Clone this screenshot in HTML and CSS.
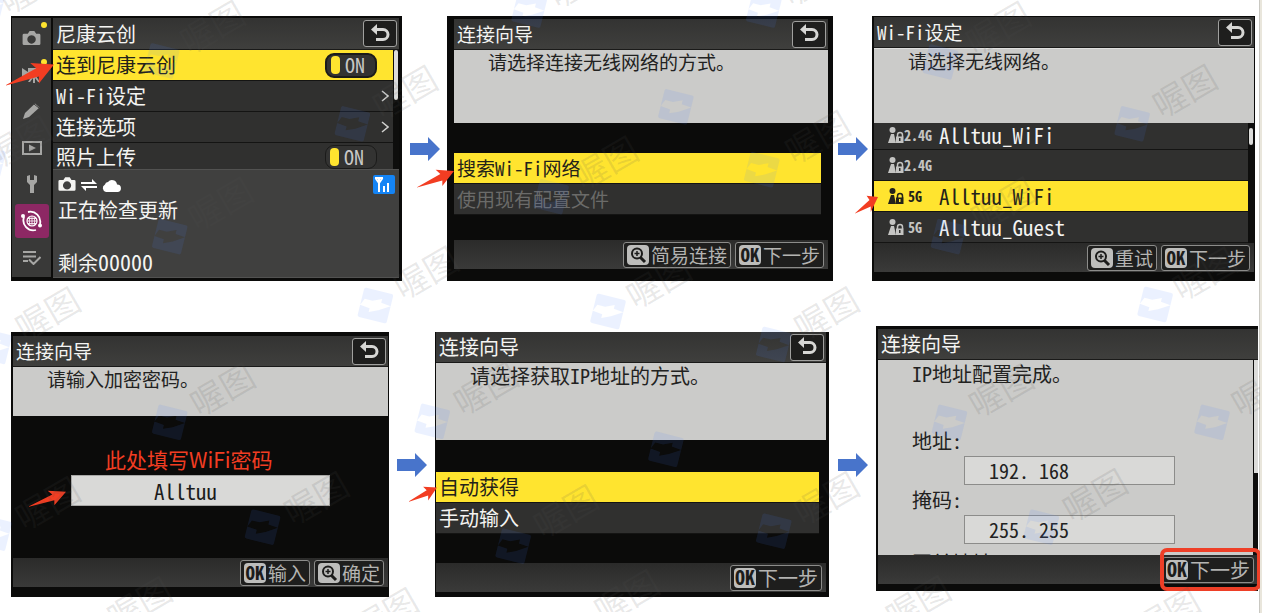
FILE: index.html
```html
<!DOCTYPE html>
<html lang="zh-CN">
<head>
<meta charset="utf-8">
<title>连接向导</title>
<link rel="stylesheet" href="styles.css">
</head>
<body>
<svg class="defs" aria-hidden="true">
  <defs>
    <symbol id="back" viewBox="0 0 20 20"><path d="M6 5.500h7a4.500 4.500 0 0 1 0 10H6" fill="none" stroke="#d6d6d4" stroke-width="3"/><path d="M1 5.500 7 0v11z" fill="#d6d6d4"/></symbol>
    <symbol id="mag" viewBox="0 0 22 20"><rect width="22" height="20" rx="4" fill="#bdbdbb"/><circle cx="10" cy="8.500" r="5" fill="none" stroke="#1c1c1b" stroke-width="2"/><path d="M13.500 12.500 18 17" stroke="#1c1c1b" stroke-width="3"/><path d="M7.500 8.500h5M10 6v5" stroke="#1c1c1b" stroke-width="1.500"/></symbol>
    <symbol id="flow" viewBox="0 0 30 24"><path d="M0 6h18V0l12 12-12 12v-6H0z" fill="#4874cb"/></symbol>
    <symbol id="point" viewBox="0 0 111 50" preserveAspectRatio="none"><path d="M0 48 70 13 56 2 111 5 76 45 76 30 0 49z" fill="#f23d22"/></symbol>
    <symbol id="cam" viewBox="0 0 20 16"><path fill-rule="evenodd" d="M2 3h4l2-3h5l2 3h3q1.500 0 1.500 1.500v9q0 1.500-1.500 1.500H2Q.5 15 .5 13.500v-9Q.5 3 2 3zm8 1.500a4.500 4.500 0 1 0 .1 0z" fill="currentColor"/></symbol>
    <symbol id="lock" viewBox="0 0 16 16"><circle cx="4.500" cy="3" r="3" fill="currentColor"/><path d="M3 7h3l2 9H0z" fill="currentColor"/><path d="M9.500 10V8a2.500 2.500 0 0 1 5 0v2" fill="none" stroke="currentColor" stroke-width="1.500"/><path fill-rule="evenodd" d="M8 9.500h7.500V16H8zm3 1.500v3h1.500v-3z" fill="currentColor"/></symbol>
    <g id="mark"><path transform="rotate(14)" fill-rule="evenodd" d="M-13-15h26a2 2 0 0 1 2 2v26a2 2 0 0 1-2 2h-26a2 2 0 0 1-2-2v-26a2 2 0 0 1 2-2zM-15 3-5 4v4L4 4 15-3 5-4v-4L-4-4-12-4z"/></g>
    <text id="word" class="word" transform="rotate(-30)" x="-34" y="12">喔图</text>
  </defs>
</svg>

<main class="board">
  <div class="flow flow-top">
    <section class="screen screen-menu">
      <nav class="side" aria-label="菜单">
        <button class="tab dot" aria-label="照片拍摄"><svg width="19" height="15"><use href="#cam"/></svg></button>
        <button class="tab dot" aria-label="视频拍摄"><svg width="20" height="16" viewBox="0 0 20 16"><path d="M0 1 6 5v2L0 10zM6 1h13v8H6zM10 9h4l4 6h-2l-3-4v5h-2v-5l-3 4H6z" fill="#a6a6a4"/></svg></button>
        <button class="tab" aria-label="自定义设定"><svg width="18" height="18" viewBox="0 0 18 18"><path d="M0 17 2 11 12 1.500 16.500 5.500 6 15z" fill="#a6a6a4"/><path d="m11 2 5 4" stroke="#393938"/></svg></button>
        <button class="tab" aria-label="播放"><svg width="20" height="14" viewBox="0 0 20 14"><path d="M1 1h18v12H1z" fill="none" stroke="#a6a6a4" stroke-width="2"/><path d="m7 3.500 7 3.500-7 3.500z" fill="#a6a6a4"/></svg></button>
        <button class="tab" aria-label="设定"><svg width="10" height="19" viewBox="0 0 10 19"><path d="M0 1 3 0v5h4V0l3 1v6L7 10v8H3v-8L0 7z" fill="#a6a6a4"/></svg></button>
        <button class="tab on" aria-label="网络"><svg width="22" height="22" viewBox="0 0 22 22"><g fill="none" stroke="#fff"><path d="M7 2a10 10 0 0 1 12 12M15 20A10 10 0 0 1 3 7" stroke-width="1.800"/><circle cx="11" cy="11" r="5" stroke-width="1.200"/><path d="M6 11h10M7 8.500h8M7 13.500h8M11 6v10M9 6.500q-1.500 4.500 0 9M13 6.500q1.500 4.500 0 9" stroke-width=".8"/></g><circle cx="2" cy="6" r="2" fill="#fff"/><circle cx="19" cy="15.500" r="2" fill="#fff"/></svg></button>
        <button class="tab" aria-label="我的菜单"><svg width="18" height="14" viewBox="0 0 18 14"><path d="M0 1h13M0 5.500h13M0 10h5M6 8.500l4.500 4.500L17.500 6" fill="none" stroke="#a6a6a4" stroke-width="2"/></svg></button>
      </nav>
      <div class="pane">
        <header class="bar"><h2>尼康云创</h2><button class="back" aria-label="返回"><svg width="20" height="20"><use href="#back"/></svg></button></header>
        <div class="scroller">
          <div class="list">
            <label class="row pick"><span>连到尼康云创</span><span class="switch"><input type="checkbox" checked>ON</span></label>
            <button class="row"><span>Wi-Fi设定</span><svg class="chev" width="8" height="12" viewBox="0 0 8 12"><path d="m1 1 6 5-6 5" fill="none" stroke="#d0d0ce" stroke-width="1.500"/></svg></button>
            <button class="row"><span>连接选项</span><svg class="chev" width="8" height="12" viewBox="0 0 8 12"><path d="m1 1 6 5-6 5" fill="none" stroke="#d0d0ce" stroke-width="1.500"/></svg></button>
            <label class="row last"><span>照片上传</span><span class="switch"><input type="checkbox" checked>ON</span></label>
          </div>
          <i class="thumb"></i>
        </div>
        <div class="status">
          <div class="status-icons">
            <svg width="18" height="15"><use href="#cam"/></svg>
            <svg width="16" height="12" viewBox="0 0 16 12"><path d="M0 5h16l-5-5v3H0zM16 7H0l5 5V9h11z" fill="#fff"/></svg>
            <svg width="20" height="14" viewBox="0 0 20 14"><path d="M4 14a4 4 0 0 1-1-7.500 3 3 0 0 1 3-2.500 5 5 0 0 1 9 2.500 3.800 3.800 0 0 1 1 7.500z" fill="#fff"/></svg>
            <svg class="wifi" width="22" height="19" viewBox="0 0 22 19"><rect width="22" height="19" rx="2" fill="#1484f5"/><path d="M2 3h8M6 3v14M2.500 3 6 8l3.500-5M11 17v-6M15 17V8" fill="none" stroke="#fff" stroke-width="2"/></svg>
          </div>
          <p>正在检查更新</p>
          <p class="left">剩余<span>00000</span></p>
        </div>
      </div>
      <svg class="point p1"><use href="#point"/></svg>
    </section>

    <svg class="arrow" width="30" height="24"><use href="#flow"/></svg>

    <section class="screen screen-way">
      <header class="bar"><h2>连接向导</h2><button class="back" aria-label="返回"><svg width="20" height="20"><use href="#back"/></svg></button></header>
      <p class="info">请选择连接无线网络的方式。</p>
      <div class="list choices">
        <button class="row pick">搜索Wi-Fi网络</button>
        <button class="row" disabled>使用现有配置文件</button>
      </div>
      <footer class="foot">
        <button class="key"><svg width="22" height="20"><use href="#mag"/></svg>简易连接</button>
        <button class="key"><b>OK</b>下一步</button>
      </footer>
      <svg class="point p2"><use href="#point"/></svg>
    </section>

    <svg class="arrow" width="30" height="24"><use href="#flow"/></svg>

    <section class="screen screen-wifi">
      <header class="bar"><h2>Wi-Fi设定</h2><button class="back" aria-label="返回"><svg width="20" height="20"><use href="#back"/></svg></button></header>
      <p class="info">请选择无线网络。</p>
      <div class="scroller">
        <div class="list">
          <button class="row net first"><svg width="16" height="16"><use href="#lock"/></svg><small>2.4G</small><span>Alltuu_WiFi</span></button>
          <button class="row net"><svg width="16" height="16"><use href="#lock"/></svg><small>2.4G</small></button>
          <button class="row net pick"><svg width="16" height="16"><use href="#lock"/></svg><small class="five">5G</small><span>Alltuu_WiFi</span></button>
          <button class="row net"><svg width="16" height="16"><use href="#lock"/></svg><small class="five">5G</small><span>Alltuu_Guest</span></button>
        </div>
        <i class="thumb"></i>
      </div>
      <footer class="foot">
        <button class="key"><svg width="22" height="20"><use href="#mag"/></svg>重试</button>
        <button class="key"><b>OK</b>下一步</button>
      </footer>
      <svg class="point p3"><use href="#point"/></svg>
    </section>
  </div>

  <div class="flow flow-bottom">
    <section class="screen screen-pass">
      <header class="bar"><h2>连接向导</h2><button class="back" aria-label="返回"><svg width="20" height="20"><use href="#back"/></svg></button></header>
      <p class="info">请输入加密密码。</p>
      <div class="entry">
        <label for="pass">此处填写WiFi密码</label>
        <input id="pass" type="text" value="Alltuu">
      </div>
      <footer class="foot">
        <button class="key"><b>OK</b>输入</button>
        <button class="key"><svg width="22" height="20"><use href="#mag"/></svg>确定</button>
      </footer>
      <svg class="point p4"><use href="#point"/></svg>
    </section>

    <svg class="arrow" width="30" height="24"><use href="#flow"/></svg>

    <section class="screen screen-ip">
      <header class="bar"><h2>连接向导</h2><button class="back" aria-label="返回"><svg width="20" height="20"><use href="#back"/></svg></button></header>
      <p class="info">请选择获取IP地址的方式。</p>
      <div class="list choices">
        <button class="row pick">自动获得</button>
        <button class="row">手动输入</button>
      </div>
      <footer class="foot">
        <button class="key"><b>OK</b>下一步</button>
      </footer>
      <svg class="point p5"><use href="#point"/></svg>
    </section>

    <svg class="arrow" width="30" height="24"><use href="#flow"/></svg>

    <section class="screen screen-done">
      <header class="bar"><h2>连接向导</h2></header>
      <div class="scroller">
        <div class="form">
          <p>IP地址配置完成。</p>
          <label for="addr">地址:</label>
          <input id="addr" type="text" value="192. 168">
          <label for="mask">掩码:</label>
          <input id="mask" type="text" value="255. 255">
          <div class="next">网关地址</div>
        </div>
        <i class="thumb"></i>
      </div>
      <footer class="foot">
        <button class="key"><b>OK</b>下一步</button>
      </footer>
      <i class="ring"></i>
    </section>
  </div>

  <svg class="marks" viewBox="0 0 1262 613" preserveAspectRatio="xMinYMin meet" aria-hidden="true">
    <g class="logos">
      <use href="#mark" x="-12" y="3"/><use href="#mark" x="162" y="61"/><use href="#mark" x="353" y="124"/><use href="#mark" x="170" y="237"/><use href="#mark" x="376" y="306"/><use href="#mark" x="-12" y="163"/>
      <use href="#mark" x="530" y="10"/><use href="#mark" x="765" y="10"/><use href="#mark" x="677" y="107"/><use href="#mark" x="763" y="170"/><use href="#mark" x="552" y="197"/><use href="#mark" x="609" y="312"/>
      <use href="#mark" x="942" y="62"/><use href="#mark" x="1134" y="124"/><use href="#mark" x="950" y="237"/><use href="#mark" x="1157" y="305"/>
      <use href="#mark" x="-6" y="347"/><use href="#mark" x="170" y="423"/><use href="#mark" x="263" y="528"/><use href="#mark" x="-6" y="534"/>
      <use href="#mark" x="433" y="422"/><use href="#mark" x="667" y="450"/><use href="#mark" x="514" y="547"/><use href="#mark" x="775" y="532"/><use href="#mark" x="775" y="345"/>
      <use href="#mark" x="951" y="423"/><use href="#mark" x="1214" y="423"/><use href="#mark" x="1043" y="528"/>
    </g>
    <g>
      <use href="#word" transform="translate(32 -12)"/><use href="#word" transform="translate(213 28)"/><use href="#word" transform="translate(406 93)"/><use href="#word" transform="translate(221 205)"/><use href="#word" transform="translate(427 274)"/><use href="#word" transform="translate(20 143)"/>
      <use href="#word" transform="translate(582 -18)"/><use href="#word" transform="translate(816 -20)"/><use href="#word" transform="translate(607 164)"/><use href="#word" transform="translate(819 138)"/><use href="#word" transform="translate(660 283)"/>
      <use href="#word" transform="translate(1000 29)"/><use href="#word" transform="translate(1187 92)"/><use href="#word" transform="translate(1005 205)"/><use href="#word" transform="translate(1207 275)"/><use href="#word" transform="translate(828 315)"/>
      <use href="#word" transform="translate(48 315)"/><use href="#word" transform="translate(223 391)"/><use href="#word" transform="translate(317 500)"/><use href="#word" transform="translate(48 505)"/><use href="#word" transform="translate(140 605)"/><use href="#word" transform="translate(387 616)"/>
      <use href="#word" transform="translate(487 390)"/><use href="#word" transform="translate(567 513)"/><use href="#word" transform="translate(828 500)"/><use href="#word" transform="translate(628 598)"/>
      <use href="#word" transform="translate(1003 392)"/><use href="#word" transform="translate(1097 497)"/><use href="#word" transform="translate(1266 391)"/><use href="#word" transform="translate(920 604)"/><use href="#word" transform="translate(1170 616)"/>
    </g>
  </svg>
</main>
</body>
</html>
```
FILE: styles.css
```css
* { box-sizing: border-box; }

body {
  margin: 0;
  background: #fff;
  font: 19px/28px "Noto Sans Mono CJK SC", "Noto Sans CJK SC", sans-serif;
  color: #f4f4f2;
}

h2, p { margin: 0; font-size: inherit; font-weight: 400; }
button, input { font: inherit; color: inherit; margin: 0; padding: 0; border: 0; border-radius: 0; background: none; }
svg, i { display: block; flex: none; }
.defs { position: absolute; width: 0; height: 0; }

.board {
  position: relative;
  min-height: 100vh;
  display: flex;
  flex-direction: column;
  gap: 45px;
  padding: 16px 0;
  overflow: hidden;
  border-right: 2px solid #e9e6dc;
  box-shadow: inset -1px 0 #c9c8c2;
}

.flow { display: grid; align-items: start; }
.flow-top { grid-template-columns: 391fr 45px 386fr 39px 383fr; padding: 0 5px 0 11px; }
.flow-bottom { grid-template-columns: 378fr 46px 394fr 47px 382fr; padding: 0 2px 0 11px; }
.flow-bottom > * { margin-top: 6px; }
.flow-bottom > .screen-done { margin-top: 0; }
.arrow { place-self: center; }

/* Camera display */
.screen {
  position: relative;
  display: flex;
  flex-direction: column;
  height: 265px;
  background: #0b0b0a;
  min-width: 0;
}

.bar {
  display: flex;
  justify-content: space-between;
  align-items: center;
  flex: none;
  height: 31px;
  padding: 0 2px 0 3px;
  background: linear-gradient(#333332, #3f3f3d);
  border-bottom: 1px solid #1a1a19;
}

.back {
  display: grid;
  place-items: center;
  width: 34px;
  height: 27px;
  border: 1px solid #a0a09e;
  border-radius: 3px;
  background: #1e1e1d;
}

.info {
  flex: none;
  padding-left: 34px;
  line-height: 24px;
  background: #cbcbc9;
  color: #222221;
}

.list { flex: 1; min-width: 0; }

.row {
  display: flex;
  align-items: center;
  width: 100%;
  height: 31px;
  padding: 0 0 0 3px;
  text-align: left;
  background: #30302f;
  border-bottom: 1px solid #141413;
}
.row.pick { background: #ffe42f; color: #23221a; }
.row:disabled { color: #6b6b69; }

.foot {
  display: flex;
  justify-content: flex-end;
  align-items: center;
  gap: 4px;
  flex: none;
  height: 29px;
  margin-top: auto;
  padding-right: 4px;
  background: linear-gradient(#2b2b2a, #3a3a39);
}

.key {
  display: flex;
  align-items: center;
  gap: 2px;
  height: 26px;
  padding: 0 3px;
  border: 1px solid #8c8c8a;
  border-radius: 3px;
  background: #1e1e1d;
  color: #b4b4b2;
  line-height: 22px;
}
.key b {
  width: 22px;
  height: 20px;
  border-radius: 4px;
  background: #bdbdbb;
  color: #1c1c1b;
  line-height: 17px;
  text-align: center;
}

.scroller { display: flex; background: #0e0e0d; }
.thumb { background: #dcdcda; border-radius: 2px; }

/* Main menu */
.screen-menu { flex-direction: row; padding: 2px 3px 4px 1px; gap: 2px; font-size: 20px; }
.side {
  display: flex;
  flex-direction: column;
  justify-content: space-between;
  align-items: center;
  width: 39px;
  flex: none;
  padding: 3px 0 2px;
  background: #393938;
  color: #a6a6a4;
}
.tab { position: relative; display: grid; place-items: center; width: 34px; height: 34px; border-radius: 3px; }
.tab.on { background: #8d2864; }
.dot::after {
  content: "";
  position: absolute;
  top: 1px;
  right: 2px;
  width: 6px;
  height: 6px;
  border-radius: 50%;
  background: #ffe42f;
}
.pane { display: flex; flex-direction: column; flex: 1; min-width: 0; }
.screen-menu .bar { height: 32px; }
.screen-menu .row { justify-content: space-between; }
.screen-menu .row.last { height: 26px; padding-top: 2px; border: 0; line-height: 24px; }
.screen-menu .thumb { width: 4px; height: 50px; margin: 0 1px; }
.chev { margin-right: 4px; }
.switch {
  display: flex;
  align-items: center;
  gap: 5px;
  width: 52px;
  height: 25px;
  flex: none;
  margin-right: 16px;
  padding-left: 4px;
  border: 2px solid #1b1b1a;
  border-radius: 9px;
  background: #333332;
  color: #c8c8c6;
  font-weight: 500;
}
.last .switch { height: 24px; border-width: 1px; }
.switch input {
  appearance: none;
  width: 9px;
  height: 18px;
  border-radius: 4px;
  background: #ffe42f;
}
.status {
  flex: 1;
  padding: 5px 4px 0 5px;
  background: #40403f;
  border: 1px solid #525251;
  border-width: 1px 0;
}
.status-icons { display: flex; align-items: center; gap: 5px; margin-bottom: 2px; }
.wifi { margin-left: auto; }
.left { margin-top: 23px; }
.left span { font-size: 22px; }

/* Connection method */
.screen-way { padding: 3px 5px 12px 7px; }
.screen-way .info { height: 73px; }
.choices { flex: none; margin: 30px 7px 0 0; }

/* Network list */
.screen-wifi { padding: 1px 1px 10px 2px; }
.screen-wifi .info { height: 75px; border-top: 1px solid #e0e0de; }
.net { padding-left: 14px; gap: 0; }
.net.first { height: 27px; padding-bottom: 3px; line-height: 24px; }
.net small { width: 35px; font-size: 14px; font-weight: 700; }
.net small.five { padding-left: 4px; }
.net:not(.pick) svg, .net:not(.pick) small { color: #c4c4c2; }
.net span { font-size: 21px; }
.screen-wifi .thumb { width: 4px; height: 17px; margin: 5px 1px; }

/* Password entry */
.screen-pass { padding: 4px 1px 10px 2px; }
.screen-pass .info { height: 49px; }
.entry {
  display: flex;
  flex-direction: column;
  gap: 1px;
  padding: 28px 58px 0;
}
.entry label { padding-left: 34px; font: 21px/30px "Noto Sans CJK SC", sans-serif; color: #f23d22; }
.entry input {
  width: 100%;
  height: 31px;
  padding-left: 82px;
  border: 1px solid #a8a8a6;
  background: #d9d9d7;
  color: #1c1c1b;
  font-size: 21px;
}

/* Address method */
.screen-ip { padding: 0 3px 5px 1px; font-size: 20px; }
.screen-ip .info { height: 77px; line-height: 26px; }
.screen-ip .choices { margin-top: 32px; }

/* Address result */
.screen-done { padding: 3px 0 7px 2px; font-size: 20px; }
.screen-done .scroller { height: 195px; overflow: hidden; }
.form { flex: 1; background: #cbcbc9; color: #222221; padding-left: 34px; }
.form p { margin-bottom: 38px; }
.form label { display: block; line-height: 30px; }
.form input {
  display: block;
  width: 211px;
  height: 29px;
  margin-left: 52px;
  padding-left: 24px;
  border: 1px solid #8c8c8a;
  background: #d9d9d7;
}
.form .next { line-height: 38px; }
.screen-done .thumb { width: 4px; height: 113px; margin-left: 1px; border-radius: 0; }

/* Annotations */
.ring {
  position: absolute;
  right: -3px;
  bottom: 0;
  width: 101px;
  height: 43px;
  border: 4px solid #ee3f27;
  border-radius: 7px;
}
.point { position: absolute; width: 37px; height: 17px; }
.p1 { left: -5px; top: 46px; width: 48px; height: 24px; }
.p2 { left: -30px; top: 153px; height: 19px; }
.p3 { left: -17px; top: 179px; width: 23px; height: 19px; }
.p4 { left: 18px; top: 158px; }
.p5 { left: -26px; top: 154px; width: 28px; height: 16px; }

/* Watermark */
.marks { position: absolute; left: 0; top: 0; width: 100%; pointer-events: none; }
.logos { fill: #4a7cff; fill-opacity: 0.11; }
.word {
  font: 400 34px "Noto Sans CJK SC", sans-serif;
  fill: #505050;
  fill-opacity: 0.13;
}
```
